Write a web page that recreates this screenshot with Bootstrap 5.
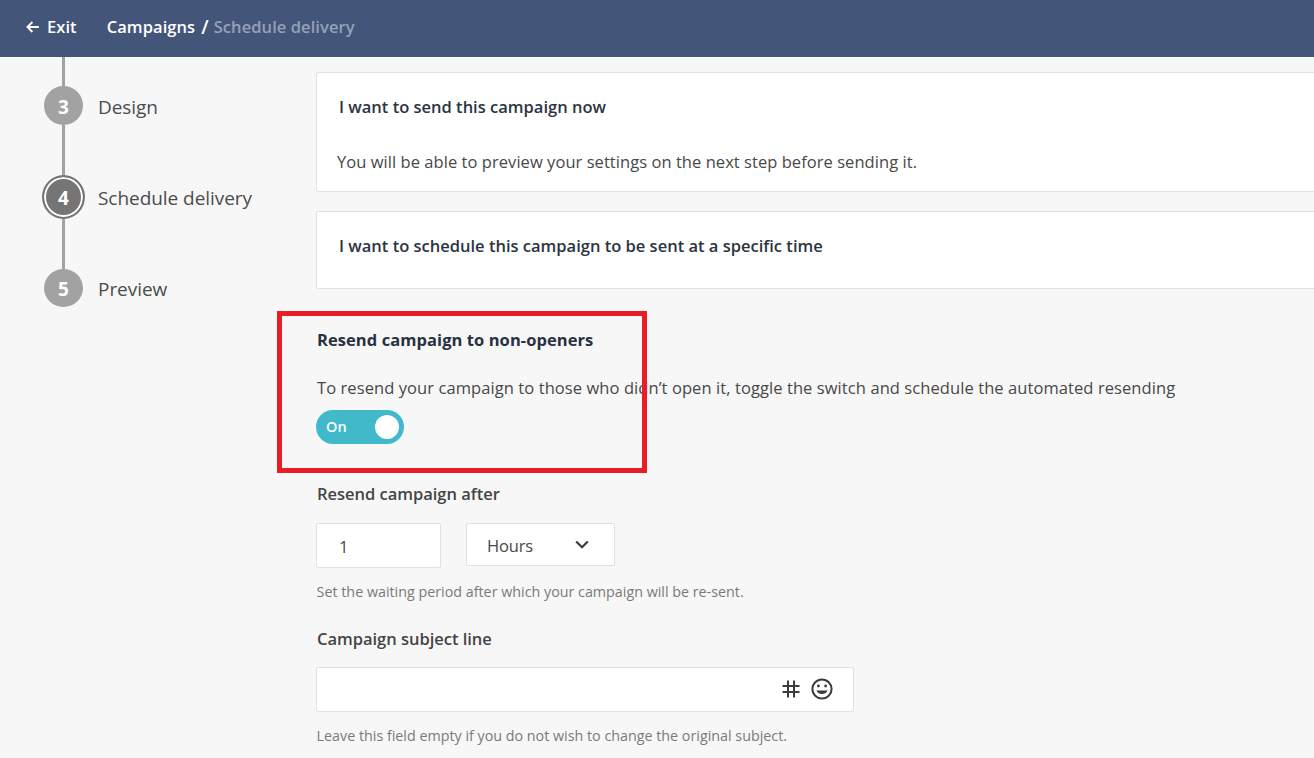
<!DOCTYPE html>
<html lang="en">
<head>
<meta charset="utf-8">
<meta name="viewport" content="width=device-width, initial-scale=1">
<title>Schedule delivery</title>
<link href="https://cdn.jsdelivr.net/npm/bootstrap@5.3.0/dist/css/bootstrap.min.css" rel="stylesheet">
<style>
body{font:400 16.5px/24px "Open Sans","Noto Sans",sans-serif;letter-spacing:.07px;color:#484848;background:#f7f7f7;height:758px;overflow:hidden}
.topbar{height:57px;background:#435578;padding:0 0 4px 26px;font-weight:600}
.topbar a{color:#fff}
.topbar .crumb{margin-left:30px}
.topbar .slash{font-size:19px;color:#fff;margin:0 5px 0 6px}
.topbar .here{color:#95a1ba}
.steps{width:316px;padding-left:42px}
.steps .line{width:3px;height:50px;margin-left:20px;background:#a2a2a2}
.steps .line.first{height:29px}
.step{font-size:19px;letter-spacing:-.05px;height:39px;color:#4c4c4c}
.step.last{height:38px}
.step .num{width:39px;height:100%;margin:0 15px 0 2px;border-radius:50%;background:#a2a2a2;color:#fff;font-weight:700;padding-top:2px}
.step .txt{padding-top:2px}
.step.current{height:44px}
.step.current .num{width:43px;margin:0 13px 0 0;background:#757575;border:2px solid #757575;box-shadow:inset 0 0 0 2px #fff}
.main{width:1030px;padding-top:15px}
.choice{border:1px solid #e1e1e1;border-radius:2px;background:#fff;padding:22px 20px}
.choice h2,.main h3,.main label{font-size:16.5px;line-height:24px;font-weight:600;margin:0}
.choice h2{color:#2b3442;letter-spacing:0;padding-left:2px}
.choice p{margin:31px 0 0;letter-spacing:.05px}
.choice.now{height:120px;margin-bottom:19px}
.choice.later{height:78px;margin-bottom:39px}
.main h3{font-weight:700;color:#27313f;padding-left:1px}
.main .lede{padding-left:1px;margin:24px 0 0;letter-spacing:.08px}
.main label{letter-spacing:-.02px;color:#444;padding-left:1px}
.toggle{width:88px;height:34px;border-radius:17px;background:#40b9ca;color:#fff;font-size:14.5px;font-weight:600;padding:0 5px 0 10px;margin:10px 0 38px}
.toggle .knob{width:24px;height:24px;border-radius:50%;background:#fff}
.delay{margin-top:17px;gap:25px}
.field{border:1px solid #e1e1e1;border-radius:2px;background:#fff;color:#484848}
.amount{width:125px;height:45px;padding:2px 0 0 22px}
.unit{width:149px;height:43px;padding:0 25px 0 20px;letter-spacing:-.15px}
.unit span{padding-top:2px}
.subject{width:538px;height:45px;padding:0 20px 1px 0;margin-top:16px;gap:11px}
.hint{font-size:14.3px;letter-spacing:0;color:#7a7a7a;margin:12px 0 23px;padding-left:.6px}
.marker{left:277px;top:311px;width:370px;height:162px;border:5px solid #e91d25}
</style>
<script src="https://cdn.jsdelivr.net/npm/bootstrap@5.3.0/dist/js/bootstrap.bundle.min.js"></script>
</head>
<body class="position-relative">
<header class="topbar d-flex align-items-center">
  <a href="#" class="d-flex align-items-center text-decoration-none">
    <svg class="me-2" width="13" height="12" viewBox="0 0 13 12" fill="none" stroke="#fff" stroke-width="1.8"><path d="M12.8 6H1.4M6.4 1 1.4 6l5 5"/></svg>Exit</a>
  <a href="#" class="crumb text-decoration-none">Campaigns</a>
  <span class="slash">/</span>
  <span class="here">Schedule delivery</span>
</header>
<div class="d-flex">
  <nav class="steps flex-shrink-0">
    <div class="line first"></div>
    <div class="step d-flex align-items-center"><span class="num d-flex align-items-center justify-content-center">3</span><span class="txt">Design</span></div>
    <div class="line"></div>
    <div class="step current d-flex align-items-center"><span class="num d-flex align-items-center justify-content-center">4</span><span class="txt">Schedule delivery</span></div>
    <div class="line"></div>
    <div class="step last d-flex align-items-center"><span class="num d-flex align-items-center justify-content-center">5</span><span class="txt">Preview</span></div>
  </nav>
  <main class="main flex-shrink-0">
    <section class="choice now">
      <h2>I want to send this campaign now</h2>
      <p>You will be able to preview your settings on the next step before sending it.</p>
    </section>
    <section class="choice later">
      <h2>I want to schedule this campaign to be sent at a specific time</h2>
    </section>
    <h3>Resend campaign to non-openers</h3>
    <p class="lede">To resend your campaign to those who didn’t open it, toggle the switch and schedule the automated resending</p>
    <div class="toggle d-flex align-items-center justify-content-between" role="switch" aria-checked="true"><span>On</span><span class="knob"></span></div>
    <label class="d-block">Resend campaign after</label>
    <div class="delay d-flex align-items-start">
      <div class="field amount d-flex align-items-center">1</div>
      <div class="field unit d-flex align-items-center justify-content-between"><span>Hours</span>
        <svg width="14" height="9" viewBox="0 0 14 9" fill="none" stroke="#3c3c3c" stroke-width="2.3"><path d="M1.2 1.5 7 7.2l5.8-5.7"/></svg>
      </div>
    </div>
    <p class="hint">Set the waiting period after which your campaign will be re-sent.</p>
    <label class="d-block">Campaign subject line</label>
    <div class="field subject d-flex align-items-center justify-content-end">
      <svg width="18" height="18" viewBox="0 0 18 18" fill="none" stroke="#3c3c3c" stroke-width="2"><path d="M6 .5v17M12 .5v17M.5 6h17M.5 12h17"/></svg>
      <svg width="22" height="22" viewBox="0 0 22 22"><circle cx="11" cy="11" r="9.6" fill="none" stroke="#3c3c3c" stroke-width="2"/><circle cx="7.4" cy="8" r="1.4" fill="#3c3c3c"/><circle cx="14.6" cy="8" r="1.4" fill="#3c3c3c"/><path d="M5.4 12.6h11.2a5.8 4.6 0 0 1-11.2 0z" fill="#3c3c3c"/></svg>
    </div>
    <p class="hint">Leave this field empty if you do not wish to change the original subject.</p>
  </main>
</div>
<div class="marker position-absolute"></div>
</body>
</html>
